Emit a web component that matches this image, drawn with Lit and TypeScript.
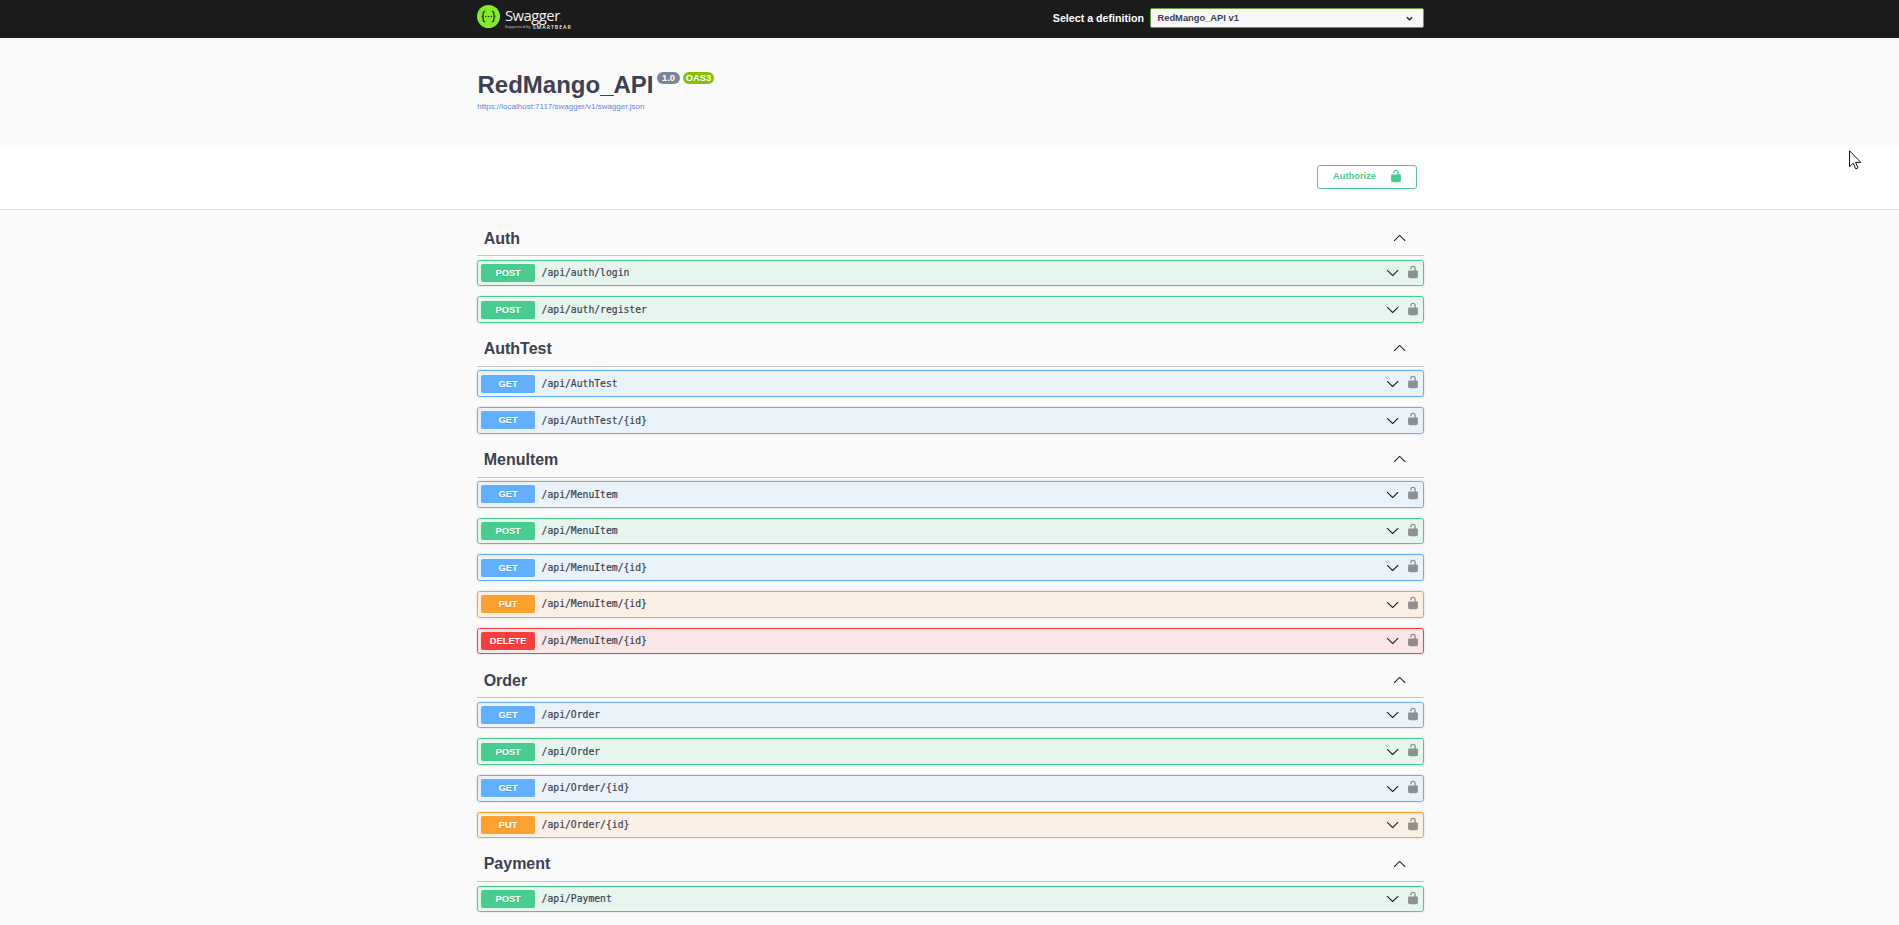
import { LitElement, html, css, svg } from "lit";
import { customElement } from "lit/decorators.js";

type Method = "get" | "post" | "put" | "delete";

const SECTIONS: { name: string; ops: [Method, string][] }[] = [
  { name: "Auth", ops: [["post", "/api/auth/login"], ["post", "/api/auth/register"]] },
  { name: "AuthTest", ops: [["get", "/api/AuthTest"], ["get", "/api/AuthTest/{id}"]] },
  {
    name: "MenuItem",
    ops: [
      ["get", "/api/MenuItem"],
      ["post", "/api/MenuItem"],
      ["get", "/api/MenuItem/{id}"],
      ["put", "/api/MenuItem/{id}"],
      ["delete", "/api/MenuItem/{id}"],
    ],
  },
  {
    name: "Order",
    ops: [
      ["get", "/api/Order"],
      ["post", "/api/Order"],
      ["get", "/api/Order/{id}"],
      ["put", "/api/Order/{id}"],
    ],
  },
  { name: "Payment", ops: [["post", "/api/Payment"]] },
];

const lockPath = svg`<path d="M15.8 8H14V5.6C14 2.703 12.665 1 10 1 7.334 1 6 2.703 6 5.6V6h2v-.801C8 3.754 8.797 3 10 3c1.203 0 2 .754 2 2.199V8H4c-.553 0-1 .646-1 1.199V17c0 .549.428 1.139.951 1.307l1.197.387C5.672 18.861 6.55 19 7.1 19h5.8c.549 0 1.428-.139 1.951-.307l1.196-.387c.524-.167.953-.757.953-1.306V9.199C17 8.646 16.352 8 15.8 8z"/>`;
const arrowUp = svg`<path d="M17.418 14.908c.272.281.701.281.979 0s.271-.712 0-.991l-7.908-7.83c-.27-.281-.701-.281-.979 0l-7.908 7.83c-.27.279-.27.71 0 .991.271.281.708.281.979 0L10 7.417l7.418 7.491z"/>`;
const arrowDown = svg`<path d="M17.418 6.109c.272-.268.709-.268.979 0s.271.701 0 .969l-7.908 7.83c-.27.268-.707.268-.979 0l-7.908-7.83c-.27-.268-.27-.701 0-.969.271-.268.709-.268.979 0L10 13.25l7.418-7.141z"/>`;

const icon = (cls: string, shape: unknown) =>
  html`<svg class=${cls} viewBox="0 0 20 20">${shape}</svg>`;

@customElement("app-root")
export class AppRoot extends LitElement {
  static styles = css`
    :host {
      display: block;
      height: 925px;
      overflow: hidden;
      position: relative;
      background: #fafafa;
      color: #3b4151;
      font-family: "Liberation Sans", Arial, sans-serif;
    }
    * { box-sizing: border-box; }
    svg { display: block; flex: none; }
    .wrap { margin-left: 477px; width: 947px; }
    .topbar { height: 38px; background: #1b1b1b; }
    .topbar .wrap { height: 36px; display: flex; align-items: center; }
    .logo { display: flex; align-items: flex-start; height: 36px; padding-top: 5px; }
    .words { margin-left: 5px; color: #fff; }
    .word { font: 400 14.8px/18px "Open Sans", sans-serif; letter-spacing: -0.5px; margin-top: 1px; height: 18px; color: #f0f0f0; }
    .tm { font-size: 4px; letter-spacing: 0; }
    .by { display: flex; align-items: center; gap: 2px; height: 6px; margin-top: 0; font: 4.1px/6px "Open Sans", sans-serif; white-space: nowrap; color: #ccc; }
    .by b { font-weight: 600; font-size: 5.2px; letter-spacing: 0.95px; color: #eee; }
    .picker { margin-left: auto; display: flex; align-items: center; font-weight: 700; color: #fff; font-size: 10.67px; }
    .select {
      margin-left: 6px; width: 274px; height: 20px; padding: 0 9px 0 6.5px;
      border: 1px solid #62a03f; border-radius: 2px; background: #f7f7f7; color: #3b4151;
      font-size: 9.33px; display: flex; align-items: center; justify-content: space-between;
    }
    .caret { width: 9px; height: 9px; fill: none; stroke: #222; stroke-width: 3; }
    .info { height: 107px; padding-top: 33px; }
    .title { display: flex; align-items: flex-start; height: 31px; font-size: 24px; line-height: 28px; font-weight: 700; }
    .badge {
      height: 12px; border-radius: 6px; color: #fff; font-size: 9.33px; line-height: 12px;
      padding: 0 4px; margin: 1px 0 0 3px; background: #7d8492; text-align: center; width: 23px;
    }
    .name { width: 177px; padding-left: 0.5px; }
    .oas { background: #89bf04; width: 31px; padding: 0; }
    .link { font-size: 8px; line-height: 10px; color: #5f88e0; padding-left: 0.3px; }
    .scheme { height: 65px; background: #fff; border-bottom: 1px solid #dedede; }
    .scheme .wrap { display: flex; justify-content: flex-end; padding: 20px 7px 0 0; }
    .auth {
      width: 100px; height: 24px; border: 1px solid #49cc90; border-radius: 3px; color: #49cc90;
      display: flex; align-items: center; padding: 0 13px 0 15px; justify-content: space-between;
      font-size: 9.33px; font-weight: 700;
    }
    .auth svg { width: 14px; height: 14px; fill: #49cc90; margin-top: -2px; }
    .auth span { margin-top: -2px; }
    .list { padding-top: 12.4px; }
    .tag {
      height: 34px; margin-bottom: 3.34px; border-bottom: 1px solid rgba(59, 65, 81, 0.3);
      display: flex; align-items: center; justify-content: space-between; padding: 0 17.5px 0 6.67px;
      font-size: 16px; font-weight: 700;
    }
    .tag span { margin-top: -0.5px; }
    .chev { width: 13.33px; height: 13.33px; fill: #111; }
    .tag .chev { margin-top: -3px; }
    .op {
      height: 26.67px; margin-bottom: 10px; border: 1px solid; border-radius: 2.67px;
      box-shadow: 0 0 2px rgba(0, 0, 0, 0.19); display: flex; align-items: center; padding: 0 3.33px;
    }
    .method {
      width: 53.6px; height: 18px; border-radius: 2px; color: #fff; text-align: center;
      font-size: 9.33px; line-height: 18.6px; font-weight: 700; text-shadow: 0 1px 0 rgba(0, 0, 0, 0.1);
    }
    .path { margin-left: 6.67px; flex: 1; font: 9.72px/14px "DejaVu Sans Mono", monospace; -webkit-text-stroke: 0.2px #3b4151; padding-top: 0.4px; }
    .lock { width: 14px; height: 14px; fill: #000; opacity: 0.4; margin: -2.4px -0.3px 0 7.1px; }
    .get { border-color: #61affe; background: rgba(97, 175, 254, 0.1); }
    .get .method { background: #61affe; }
    .post { border-color: #49cc90; background: rgba(73, 204, 144, 0.1); }
    .post .method { background: #49cc90; }
    .put { border-color: #fca130; background: rgba(252, 161, 48, 0.1); }
    .put .method { background: #fca130; }
    .delete { border-color: #f93e3e; background: rgba(249, 62, 62, 0.1); }
    .delete .method { background: #f93e3e; }
    .cursor { position: absolute; left: 1849px; top: 150px; width: 13px; height: 20px; }
  `;

  render() {
    return html`
      <header class="topbar">
        <div class="wrap">
          <div class="logo">
            <svg width="23" height="23" viewBox="0 0 23 23">
              <circle cx="11.5" cy="11.5" r="11.5" fill="#85ea2d" />
              <g fill="none" stroke="#173647" stroke-width="1.3">
                <path d="M8.2 6.3c-1.8 0-2 .8-2 2v1.4c0 1.1-.4 1.8-1.6 1.8 1.2 0 1.6.7 1.6 1.8v1.4c0 1.2.2 2 2 2" />
                <path d="M14.8 6.3c1.8 0 2 .8 2 2v1.4c0 1.1.4 1.8 1.6 1.8-1.2 0-1.6.7-1.6 1.8v1.4c0 1.2-.2 2-2 2" />
              </g>
              <g fill="#173647"><circle cx="8.7" cy="11.5" r=".8" /><circle cx="11.5" cy="11.5" r=".8" /><circle cx="14.3" cy="11.5" r=".8" /></g>
            </svg>
            <div class="words">
              <div class="word">Swagger<span class="tm">.</span></div>
              <div class="by">Supported by <b>SMARTBEAR</b></div>
            </div>
          </div>
          <div class="picker">
            <span>Select a definition</span>
            <div class="select"><span>RedMango_API v1</span>${icon("caret", svg`<path d="M4 7l6 6 6-6" />`)}</div>
          </div>
        </div>
      </header>
      <section class="info wrap">
        <div class="title"><span class="name">RedMango_API</span><span class="badge">1.0</span><span class="badge oas">OAS3</span></div>
        <div class="link">https://localhost:7117/swagger/v1/swagger.json</div>
      </section>
      <section class="scheme">
        <div class="wrap"><div class="auth"><span>Authorize</span>${icon("", lockPath)}</div></div>
      </section>
      <main class="list wrap">
        ${SECTIONS.map(
          (s) => html`
            <div class="tag"><span>${s.name}</span>${icon("chev", arrowUp)}</div>
            ${s.ops.map(
              ([m, p]) => html`<div class="op ${m}">
                <span class="method">${m.toUpperCase()}</span><span class="path">${p}</span>
                ${icon("chev", arrowDown)}${icon("lock", lockPath)}
              </div>`
            )}
          `
        )}
      </main>
      <svg class="cursor" viewBox="0 0 13 20"><path d="M.5.7v16l3.7-3.5 2.5 5.6 2.3-1-2.4-5.4h5.2z" fill="#fff" stroke="#111122" stroke-width="1" /></svg>
    `;
  }
}
